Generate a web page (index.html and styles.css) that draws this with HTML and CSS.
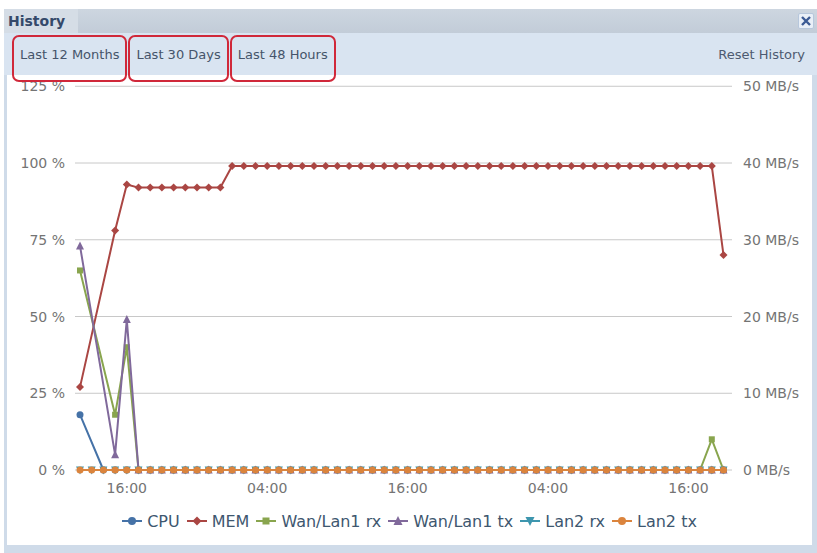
FILE: index.html
```html
<!DOCTYPE html>
<html lang="en">
<head>
  <meta charset="UTF-8">
  <title>History</title>
  <link rel="stylesheet" href="styles.css">
</head>
<body>
  <div class="panel">
    <div class="panel-header">
      <span class="panel-title">History</span>
      <button class="tool-close" title="Close">
        <svg width="10" height="10" viewBox="0 0 10 10"><path d="M1 1 L9 9 M9 1 L1 9" /></svg>
      </button>
    </div>

    <div class="toolbar">
      <button class="range-btn">Last 12 Months</button>
      <button class="range-btn">Last 30 Days</button>
      <button class="range-btn">Last 48 Hours</button>
      <button class="reset-btn">Reset History</button>
    </div>

    <div class="chart-body">
      <svg id="plot" class="plot" width="805" height="430" viewBox="7 75 805 430"></svg>

      <div class="legend">
        <div class="legend-item">
          <svg width="20" height="12"><line x1="0" y1="6" x2="20" y2="6" stroke="#4572A7" stroke-width="2"/><circle cx="10" cy="6" r="4" fill="#4572A7"/></svg>
          <span>CPU</span>
        </div>
        <div class="legend-item">
          <svg width="20" height="12"><line x1="0" y1="6" x2="20" y2="6" stroke="#AA4643" stroke-width="2"/><polygon points="10,1.5 14.5,6 10,10.5 5.5,6" fill="#AA4643"/></svg>
          <span>MEM</span>
        </div>
        <div class="legend-item">
          <svg width="20" height="12"><line x1="0" y1="6" x2="20" y2="6" stroke="#89A54E" stroke-width="2"/><rect x="6.5" y="2.5" width="7" height="7" fill="#89A54E"/></svg>
          <span>Wan/Lan1 rx</span>
        </div>
        <div class="legend-item">
          <svg width="20" height="12"><line x1="0" y1="6" x2="20" y2="6" stroke="#80699B" stroke-width="2"/><polygon points="10,1 14.5,10 5.5,10" fill="#80699B"/></svg>
          <span>Wan/Lan1 tx</span>
        </div>
        <div class="legend-item">
          <svg width="20" height="12"><line x1="0" y1="6" x2="20" y2="6" stroke="#3D96AE" stroke-width="2"/><polygon points="5.5,2 14.5,2 10,11" fill="#3D96AE"/></svg>
          <span>Lan2 rx</span>
        </div>
        <div class="legend-item">
          <svg width="20" height="12"><line x1="0" y1="6" x2="20" y2="6" stroke="#DB843D" stroke-width="2"/><circle cx="10" cy="6" r="4" fill="#DB843D"/></svg>
          <span>Lan2 tx</span>
        </div>
      </div>
    </div>
  </div>

  <script>
    const NS = 'http://www.w3.org/2000/svg';
    const plot = document.getElementById('plot');

    // plot area in page pixels
    const LEFT = 75, RIGHT = 732, ZERO = 470, PX_PER_PCT = 3.07;
    const X0 = 80, DX = 11.7, COUNT = 56;

    const xPos = i => X0 + i * DX;
    const yPos = v => ZERO - v * PX_PER_PCT;

    function el(name, attrs, text) {
      const node = document.createElementNS(NS, name);
      for (const k in attrs) node.setAttribute(k, attrs[k]);
      if (text) node.textContent = text;
      plot.appendChild(node);
      return node;
    }

    function fill(len, value) {
      return new Array(len).fill(value);
    }

    // grid + axis labels
    [125, 100, 75, 50, 25, 0].forEach(v => {
      const y = yPos(v);
      el('line', { x1: LEFT, y1: y, x2: RIGHT, y2: y, class: 'grid' });
      el('text', { x: 65, y: y + 5, class: 'axis-label', 'text-anchor': 'end' }, v + ' %');
      el('text', { x: 743, y: y + 5, class: 'axis-label' }, (v * 0.4) + ' MB/s');
    });

    ['16:00', '04:00', '16:00', '04:00', '16:00'].forEach((t, n) => {
      el('text', { x: xPos(4 + n * 12), y: 493, class: 'axis-label', 'text-anchor': 'middle' }, t);
    });

    // one value per hour, null = no sample (line runs straight through)
    const cpu = [18, null].concat(fill(COUNT - 2, 0));
    const mem = [27, null, null, 78, 93].concat(fill(8, 92), fill(42, 99), [70]);
    const wanRx = [65, null, null, 18, 40].concat(fill(COUNT - 5, 0));
    wanRx[54] = 10;
    const wanTx = [73, null, null, 5, 49].concat(fill(COUNT - 5, 0));
    const lan2Rx = fill(COUNT, 0);
    const lan2Tx = fill(COUNT, 0);

    const series = [
      { data: cpu, color: '#4572A7', marker: 'circle' },
      { data: mem, color: '#AA4643', marker: 'diamond' },
      { data: wanRx, color: '#89A54E', marker: 'square' },
      { data: wanTx, color: '#80699B', marker: 'triangle' },
      { data: lan2Rx, color: '#3D96AE', marker: 'triangle-down' },
      { data: lan2Tx, color: '#DB843D', marker: 'circle' }
    ];

    function marker(type, x, y, color) {
      if (type === 'circle') {
        el('circle', { cx: x, cy: y, r: 3.5, fill: color });
      } else if (type === 'square') {
        el('rect', { x: x - 3, y: y - 3, width: 6, height: 6, fill: color });
      } else {
        let pts;
        if (type === 'diamond') pts = [[x, y - 4], [x + 4, y], [x, y + 4], [x - 4, y]];
        if (type === 'triangle') pts = [[x, y - 4.5], [x + 4, y + 3.5], [x - 4, y + 3.5]];
        if (type === 'triangle-down') pts = [[x - 4, y - 3.5], [x + 4, y - 3.5], [x, y + 4.5]];
        el('polygon', { points: pts.map(p => p.join(',')).join(' '), fill: color });
      }
    }

    series.forEach(s => {
      const pts = [];
      s.data.forEach((v, i) => {
        if (v !== null) pts.push(xPos(i).toFixed(1) + ',' + yPos(v).toFixed(1));
      });
      el('polyline', { points: pts.join(' '), stroke: s.color, class: 'series' });
      s.data.forEach((v, i) => {
        if (v !== null) marker(s.marker, xPos(i), yPos(v), s.color);
      });
    });
  </script>
</body>
</html>
```

FILE: styles.css
```css
body {
  margin: 0;
  background: #fff;
  font-family: "DejaVu Sans", Verdana, sans-serif;
}

.panel {
  width: 813px;
  height: 544px;
  margin: 9px 0 0 4px;
  display: flex;
  flex-direction: column;
  background: #cfdbe9;
}

.panel-header {
  height: 24px;
  display: flex;
  align-items: center;
  background: linear-gradient(#cdd6e0, #c2ccd8);
}

.panel-title {
  height: 100%;
  display: flex;
  align-items: center;
  padding: 0 13px 0 4px;
  background: #d5dde6;
  font-size: 14px;
  font-weight: bold;
  color: #34496a;
}

.tool-close {
  margin-left: auto;
  margin-right: 3px;
  width: 16px;
  height: 16px;
  padding: 0;
  display: flex;
  align-items: center;
  justify-content: center;
  border: 1px solid #b7c7dc;
  border-radius: 2px;
  background: #e9eff7;
}

.tool-close path {
  stroke: #3b5a94;
  stroke-width: 2.4;
  fill: none;
}

.toolbar {
  height: 42px;
  box-sizing: border-box;
  display: flex;
  align-items: flex-start;
  gap: 1px;
  padding: 2px 12px 0 8px;
  background: #d9e4f1;
}

.range-btn {
  position: relative;
  z-index: 1;
  height: 47px;
  box-sizing: border-box;
  padding: 0 6px 7px;
  line-height: 36px;
  border: 2px solid #d0283a;
  border-radius: 7px;
  background: transparent;
  font-family: "DejaVu Sans", Verdana, sans-serif;
  font-size: 13px;
  color: #45546a;
}

.reset-btn {
  margin-left: auto;
  padding: 0;
  border: 0;
  background: none;
  line-height: 40px;
  font-family: "DejaVu Sans", Verdana, sans-serif;
  font-size: 13px;
  color: #4d5a70;
}

.chart-body {
  flex: 1;
  margin: 0 5px 8px 3px;
  display: flex;
  flex-direction: column;
  background: #fff;
}

.plot {
  display: block;
}

.grid {
  stroke: #c8c8c8;
  stroke-width: 1;
}

.axis-label {
  font-family: "DejaVu Sans", Verdana, sans-serif;
  font-size: 14px;
  fill: #747474;
}

.series {
  fill: none;
  stroke-width: 2;
  stroke-linejoin: round;
}

.legend {
  flex: 1;
  display: flex;
  justify-content: center;
  align-items: center;
  gap: 7px;
  padding-bottom: 8px;
}

.legend-item {
  display: flex;
  align-items: center;
  gap: 5px;
  font-size: 16px;
  color: #3e576f;
}

.legend-item svg {
  display: block;
}
```
